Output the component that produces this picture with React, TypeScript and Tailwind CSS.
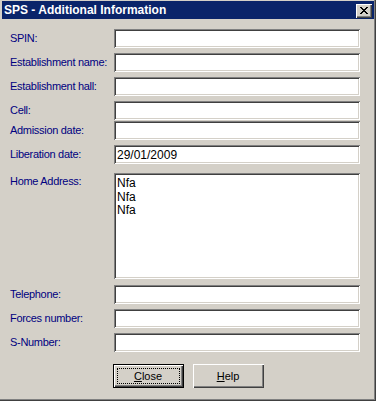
import React from "react";

const topFields = [
    { label: "SPIN:", value: "", gap: "mt-[10px]" },
    { label: "Establishment name:", value: "", gap: "mt-[5px]" },
    { label: "Establishment hall:", value: "", gap: "mt-[5px]" },
    { label: "Cell:", value: "", gap: "mt-[5px]" },
    { label: "Admission date:", value: "", gap: "mt-[1px]" },
    { label: "Liberation date:", value: "29/01/2009", gap: "mt-[5px]" },
];

const bottomFields = [
    { label: "Telephone:", value: "", gap: "mt-[6px]" },
    { label: "Forces number:", value: "", gap: "mt-[5px]" },
    { label: "S-Number:", value: "", gap: "mt-[5px]" },
];

// classic sunken 3D edge
const sunken =
    "shadow-[inset_1px_1px_0_#808080,inset_-1px_-1px_0_#ffffff,inset_2px_2px_0_#404040,inset_-2px_-2px_0_#d4d0c8]";
const raised =
    "shadow-[inset_1px_1px_0_#ffffff,inset_-1px_-1px_0_#404040,inset_-2px_-2px_0_#808080]";

const Label: React.FC<{ text: string; className?: string }> = ({ text, className = "" }) => (
    <span className={`w-[104px] shrink-0 text-[11px] leading-[13px] tracking-[-0.3px] text-[#000080] ${className}`}>
        {text}
    </span>
);

const Field: React.FC<{ label: string; value: string; gap: string }> = ({ label, value, gap }) => (
    <div className={`flex items-center ${gap}`}>
        <Label text={label} />
        <input
            readOnly
            value={value}
            className={`w-[246px] h-[19px] bg-white px-[3px] text-[12px] leading-[15px] text-black outline-none ${sunken}`}
        />
    </div>
);

export default function App() {
    return (
        <div
            className="w-[376px] h-[401px] bg-[#d4d0c8] flex flex-col font-['Liberation_Sans',Arial,sans-serif] shadow-[inset_-1px_-1px_0_#404040,inset_-2px_-2px_0_#808080]"
        >
            {/* Title bar */}
            <div className="mt-[1px] mx-[2px] h-[18px] bg-[#0a246a] flex items-center justify-between pl-[2px] pr-[2px]">
                <span className="text-white font-bold text-[12px] leading-[14px]">SPS - Additional Information</span>
                <button
                    className={`mt-[2px] w-[16px] h-[14px] bg-[#d4d0c8] flex items-center justify-center ${raised}`}
                >
                    <svg width="8" height="7" viewBox="0 0 8 7" className="mb-[1px]">
                        <path d="M0 0h2v1h1v1h2v-1h1v-1h2v1h-1v1h-1v1h-1v1h1v1h1v1h1v1h-2v-1h-1v-1h-2v1h-1v1h-2v-1h1v-1h1v-1h1v-1h-1v-1h-1v-1h-1z" fill="#000" />
                    </svg>
                </button>
            </div>

            {/* Form */}
            <div className="flex flex-col pl-[10px]">
                {topFields.map((f) => (
                    <Field key={f.label} {...f} />
                ))}

                <div className="flex items-start mt-[9px]">
                    <Label text="Home Address:" className="mt-[2px]" />
                    <textarea
                        readOnly
                        value={"Nfa\nNfa\nNfa"}
                        className={`w-[246px] h-[106px] bg-white px-[3px] pt-[4px] text-[12px] leading-[13.5px] text-black outline-none resize-none overflow-hidden ${sunken}`}
                    />
                </div>

                {bottomFields.map((f) => (
                    <Field key={f.label} {...f} />
                ))}
            </div>

            {/* Buttons */}
            <div className="mt-[12px] flex justify-center gap-[9px]">
                <button className="w-[71px] h-[24px] border border-black bg-[#d4d0c8] p-0">
                    <div className={`w-full h-full flex p-[3px] ${raised}`}>
                        <div className="flex-1 border border-dotted border-black flex items-center justify-center text-[11px] leading-[13px] text-black">
                            <span className="underline underline-offset-[1px]">C</span>lose
                        </div>
                    </div>
                </button>
                <button
                    className={`w-[71px] h-[24px] bg-[#d4d0c8] flex items-center justify-center text-[11px] leading-[13px] text-black ${raised}`}
                >
                    <span>
                        <span className="underline underline-offset-[1px]">H</span>elp
                    </span>
                </button>
            </div>
        </div>
    );
}
